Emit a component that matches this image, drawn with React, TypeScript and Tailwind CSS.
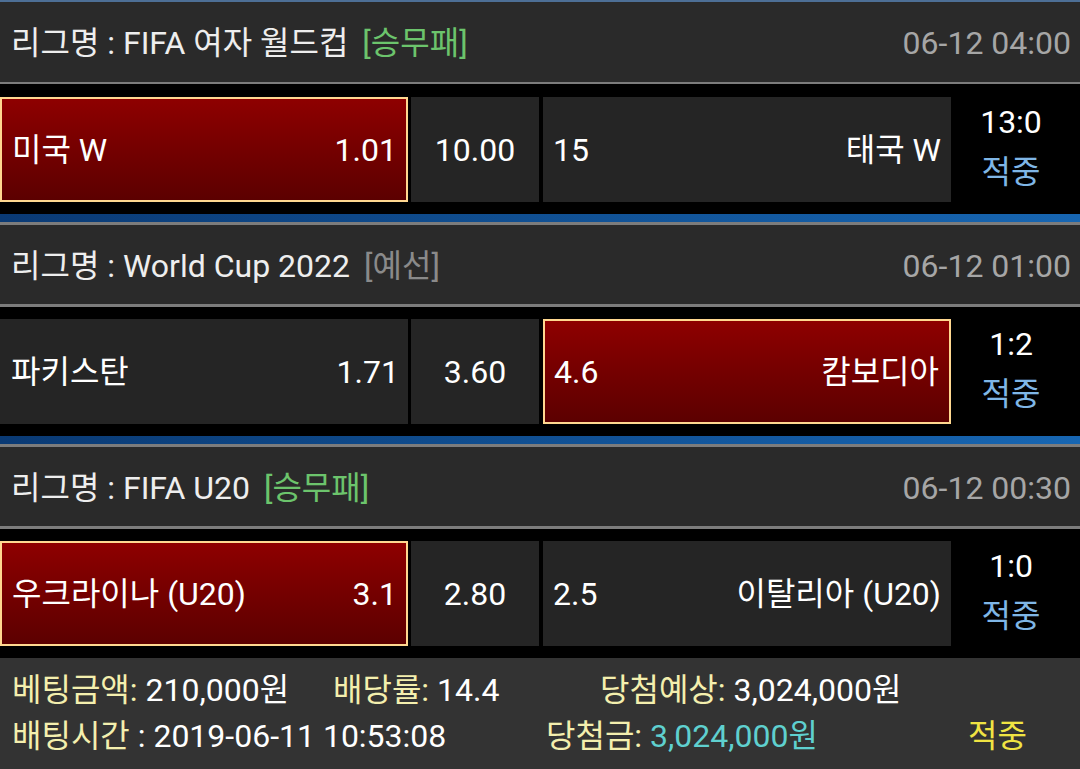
import React from "react";

type Match = {
  league: string;
  tag: string;
  tagClass: string;
  date: string;
  home: string;
  homeOdd: string;
  draw: string;
  awayOdd: string;
  away: string;
  pick: "home" | "away";
  score: string;
};

const matches: Match[] = [
  {
    league: "FIFA 여자 월드컵",
    tag: "[승무패]",
    tagClass: "text-[#6cc46c]",
    date: "06-12 04:00",
    home: "미국 W",
    homeOdd: "1.01",
    draw: "10.00",
    awayOdd: "15",
    away: "태국 W",
    pick: "home",
    score: "13:0",
  },
  {
    league: "World Cup 2022",
    tag: "[예선]",
    tagClass: "text-[#8a8a8a]",
    date: "06-12 01:00",
    home: "파키스탄",
    homeOdd: "1.71",
    draw: "3.60",
    awayOdd: "4.6",
    away: "캄보디아",
    pick: "away",
    score: "1:2",
  },
  {
    league: "FIFA U20",
    tag: "[승무패]",
    tagClass: "text-[#6cc46c]",
    date: "06-12 00:30",
    home: "우크라이나 (U20)",
    homeOdd: "3.1",
    draw: "2.80",
    awayOdd: "2.5",
    away: "이탈리아 (U20)",
    pick: "home",
    score: "1:0",
  },
];

const picked = "border-2 border-[#ffd890] bg-gradient-to-b from-[#8e0000] to-[#5c0000]";
const plain = "bg-[#252525]";

function MatchBlock({ m, first }: { m: Match; first: boolean }) {
  const homePicked = m.pick === "home";
  const awayPicked = m.pick === "away";
  return (
    <div>
      {first ? (
        <div className="h-[2px] bg-[#4d6f96]" />
      ) : (
        <>
          <div className="h-[8px] bg-gradient-to-r from-[#0a3a74] to-[#1766b2]" />
          <div className="h-[3px] bg-[#7c7c7c]" />
        </>
      )}
      <div
        className={`flex items-center justify-between bg-[#2a2a2a] pl-[11px] pr-[9px] pt-[2px] ${
          first ? "h-[80px]" : "h-[79px]"
        }`}
      >
        <div className="flex items-center text-[#eeeeee]">
          <span>리그명 : {m.league}</span>
          <span className={`ml-[14px] ${m.tagClass}`}>{m.tag}</span>
        </div>
        <span className="text-[#a6a6a6]">{m.date}</span>
      </div>
      <div className={first ? "h-[2px] bg-[#7c7c7c]" : "h-[3px] bg-[#7c7c7c]"} />
      <div className={`flex bg-black pb-[12px] ${first ? "pt-[13px]" : "pt-[12px]"}`}>
        <div
          className={`flex h-[105px] w-[408px] items-center justify-between pr-[9px] ${
            homePicked ? `${picked} pl-[10px]` : `${plain} pl-[11px]`
          }`}
        >
          <span>{m.home}</span>
          <span>{m.homeOdd}</span>
        </div>
        <div className="ml-[3px] flex h-[105px] w-[128px] items-center justify-center bg-[#252525]">
          {m.draw}
        </div>
        <div
          className={`ml-[4px] flex h-[105px] w-[408px] items-center justify-between pr-[10px] ${
            awayPicked ? `${picked} pl-[9px]` : `${plain} pl-[10px]`
          }`}
        >
          <span>{m.awayOdd}</span>
          <span>{m.away}</span>
        </div>
        <div className="flex flex-1 flex-col items-center justify-center pr-[9px] leading-[50px]">
          <span className="-mt-[5px]">{m.score}</span>
          <span className="text-[#7fb6e6]">적중</span>
        </div>
      </div>
    </div>
  );
}

export default function App() {
  return (
    <div className="h-[769px] w-[1080px] overflow-hidden bg-black font-[Roboto,'Noto_Sans_CJK_KR',sans-serif] text-[32px] text-white">
      {matches.map((m, i) => (
        <MatchBlock key={i} m={m} first={i === 0} />
      ))}
      <div className="h-[111px] bg-[#333333] pl-[12px] pt-[9px] leading-[46px]">
        <div className="flex">
          <span className="w-[321px]">
            <span className="text-[#f4efae]">베팅금액:</span> 210,000원
          </span>
          <span className="w-[267px]">
            <span className="text-[#f4efae]">배당률:</span> 14.4
          </span>
          <span>
            <span className="text-[#f4efae]">당첨예상:</span> 3,024,000원
          </span>
        </div>
        <div className="flex">
          <span className="w-[534px]">
            <span className="text-[#f4efae]">배팅시간</span> : 2019-06-11 10:53:08
          </span>
          <span className="w-[422px]">
            <span className="text-[#f4efae]">당첨금:</span>{" "}
            <span className="text-[#5fd0cf]">3,024,000원</span>
          </span>
          <span className="text-[#f0e443]">적중</span>
        </div>
      </div>
    </div>
  );
}
